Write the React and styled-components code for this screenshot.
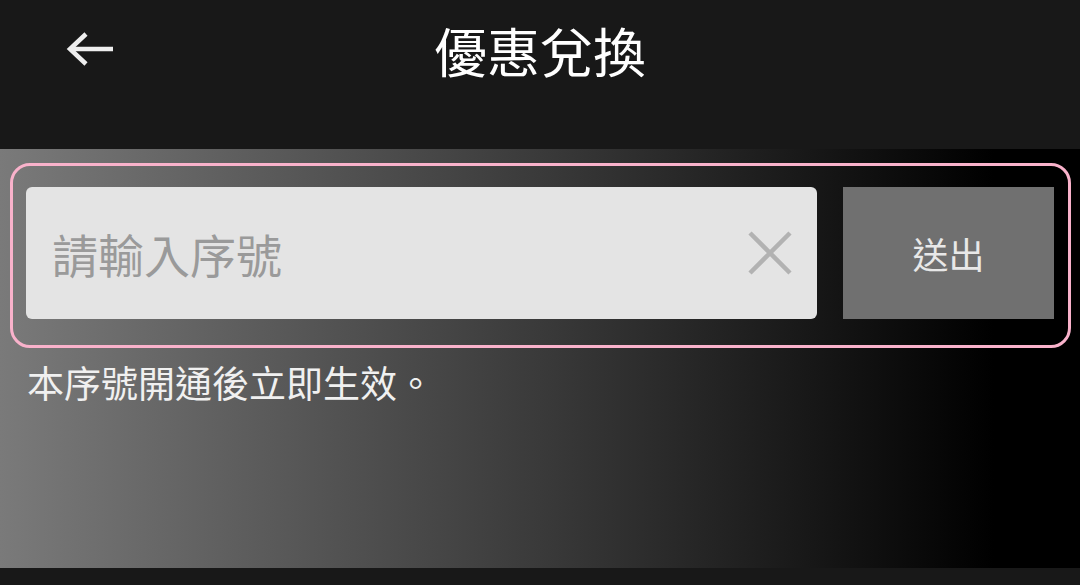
import React from 'react';
import styled, { createGlobalStyle } from 'styled-components';

const Global = createGlobalStyle`
    html, body {
        margin: 0;
        padding: 0;
        background: #181818;
    }

    body {
        font-family: "Noto Sans CJK TC", "Noto Sans", sans-serif;
    }
`;

const Page = styled.div`
    width: 1080px;
    height: 585px;
    display: flex;
    flex-direction: column;
    background: #181818;
    overflow: hidden;
`;

const Header = styled.header`
    height: 149px;
    flex-shrink: 0;
    display: grid;
    grid-template-columns: 160px 1fr 160px;
    align-items: start;
    padding-top: 18px;
    box-sizing: border-box;
`;

const BackButton = styled.button`
    justify-self: start;
    margin: 14px 0 0 66px;
    padding: 0;
    border: none;
    background: none;
    display: flex;
    cursor: pointer;
`;

const Title = styled.h1`
    margin: 0;
    text-align: center;
    font-size: 53px;
    font-weight: 400;
    line-height: 64px;
    color: #ffffff;
`;

const Panel = styled.main`
    height: 419px;
    flex-shrink: 0;
    background: linear-gradient(to right, #7a7a7a 0%, #3a3a3a 50%, #000000 92%);
    padding: 14px 9px 0 10px;
    box-sizing: border-box;
`;

const Redeem = styled.div`
    display: flex;
    align-items: stretch;
    gap: 26px;
    height: 185px;
    box-sizing: border-box;
    border: 3px solid #f9b2cb;
    border-radius: 20px;
    padding: 21px 14px 26px 13px;
`;

const Field = styled.div`
    flex: 1;
    display: flex;
    align-items: center;
    background: #e4e4e4;
    border-radius: 6px;
    padding: 0 25px 0 24px;
`;

const Input = styled.input`
    flex: 1;
    min-width: 0;
    border: none;
    outline: none;
    background: transparent;
    font-family: inherit;
    font-size: 46px;
    color: #333;

    &::placeholder {
        color: #9a9a9a;
    }
`;

const ClearButton = styled.button`
    border: none;
    background: none;
    padding: 0;
    display: flex;
    cursor: pointer;
`;

const Submit = styled.button`
    width: 211px;
    border: none;
    background: #707070;
    color: #e8e8e8;
    font-family: inherit;
    font-size: 36px;
    cursor: pointer;
`;

const Note = styled.p`
    margin: 11px 0 0 17px;
    font-size: 37px;
    line-height: 46px;
    color: #f0f0f0;
`;

const Footer = styled.div`
    flex: 1;
    background: #181818;
`;

const App = () => {

    const [code, setCode] = React.useState('');

    return (
        <Page>
            <Global/>
            <Header>
                <BackButton aria-label="back">
                    <svg width="50" height="34" viewBox="0 0 50 34">
                        <path d="M47 17H6" stroke="#eeeeee" strokeWidth="4.5" fill="none"/>
                        <path d="M20 2L4 17l16 15" stroke="#eeeeee" strokeWidth="4.5" fill="none" strokeLinejoin="miter"/>
                    </svg>
                </BackButton>
                <Title>優惠兌換</Title>
            </Header>
            <Panel>
                <Redeem>
                    <Field>
                        <Input
                            value={ code }
                            placeholder="請輸入序號"
                            onChange={ (e) => setCode(e.target.value) }
                        />
                        <ClearButton aria-label="clear" onClick={ () => setCode('') }>
                            <svg width="44" height="44" viewBox="0 0 44 44">
                                <path d="M2 2L42 42M42 2L2 42" stroke="#b2b2b2" strokeWidth="4.5"/>
                            </svg>
                        </ClearButton>
                    </Field>
                    <Submit>送出</Submit>
                </Redeem>
                <Note>本序號開通後立即生效。</Note>
            </Panel>
            <Footer/>
        </Page>
    );
}

export default App;
